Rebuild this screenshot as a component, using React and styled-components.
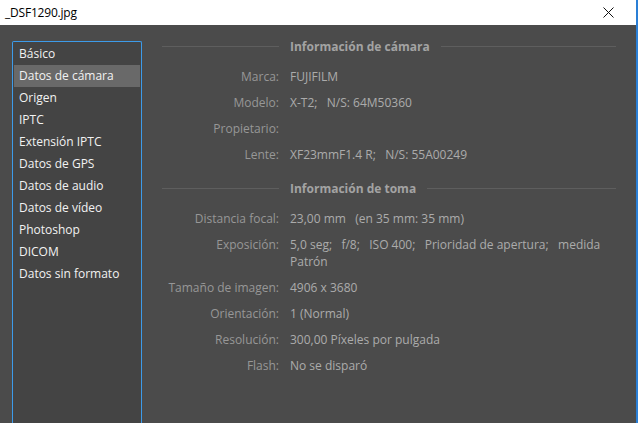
import React from 'react'
import styled, { createGlobalStyle } from 'styled-components'

const GlobalStyle = createGlobalStyle`
	html, body {
		margin: 0;
		padding: 0;
		background: #4b4b4b;
	}
	* {
		box-sizing: border-box;
	}
`

const sans = `"Open Sans", "Noto Sans", "Liberation Sans", sans-serif`

const Window = styled.div`
	width: 638px;
	height: 423px;
	display: flex;
	flex-direction: column;
	border-right: 2px solid #2a7fd6;
	font-family: ${sans};
	font-size: 12px;
	overflow: hidden;
`

const TitleBar = styled.div`
	height: 25px;
	flex: 0 0 25px;
	background: #ffffff;
	display: flex;
	align-items: center;
	justify-content: space-between;
	padding: 0 22px 0 5px;
	color: #000;
	font-size: 12px;
	letter-spacing: -0.2px;
`

const CloseButton = styled.svg`
	width: 11px;
	height: 11px;
	display: block;
`

const Body = styled.div`
	flex: 1;
	display: flex;
	align-items: stretch;
	background: #4b4b4b;
	padding: 16px 0 0 12px;
	min-height: 0;
`

const Sidebar = styled.ul`
	list-style: none;
	margin: 0;
	padding: 1px 0 0;
	width: 130px;
	flex: 0 0 130px;
	background: #444444;
	border: 1px solid #3d9be9;
	border-bottom: none;
	border-radius: 2px 2px 0 0;
`

const NavItem = styled.li`
	height: 22px;
	line-height: 22px;
	margin: 0 1px;
	padding-left: 5px;
	color: #f2f2f2;
	white-space: nowrap;
	background: ${({ active }) => (active ? '#696969' : 'transparent')};
`

const Content = styled.div`
	flex: 1;
	margin-top: -3px;
	padding: 0 20px 0 20px;
	display: flex;
	flex-direction: column;
`

const Section = styled.section`
	display: flex;
	flex-direction: column;
	gap: 9px;

	& + & {
		margin-top: 17px;
	}
`

const Grid = styled.div`
	display: grid;
	grid-template-columns: 117px 1fr;
	column-gap: 11px;
	align-items: start;
	line-height: 17px;
`

const HeaderRow = styled(Grid)`
	align-items: center;
	margin-bottom: ${({ space }) => space}px;
`

const Rule = styled.div`
	height: 1px;
	background: #5e5e5e;
`

const HeaderTitle = styled.div`
	display: flex;
	align-items: center;
	gap: 11px;
	font-weight: 700;
	color: #a3a3a3;

	& > span {
		white-space: nowrap;
	}
	& > ${Rule} {
		flex: 1;
	}
`

const Label = styled.div`
	text-align: right;
	color: #979797;
	white-space: nowrap;
`

const Value = styled.div`
	color: #ababab;
	white-space: pre-wrap;
`

const navItems = [
	'Básico',
	'Datos de cámara',
	'Origen',
	'IPTC',
	'Extensión IPTC',
	'Datos de GPS',
	'Datos de audio',
	'Datos de vídeo',
	'Photoshop',
	'DICOM',
	'Datos sin formato',
]

const sections = [
	{
		title: 'Información de cámara',
		space: 4,
		rows: [
			['Marca:', 'FUJIFILM'],
			['Modelo:', 'X-T2;   N/S: 64M50360'],
			['Propietario:', ''],
			['Lente:', 'XF23mmF1.4 R;   N/S: 55A00249'],
		],
	},
	{
		title: 'Información de toma',
		space: 4,
		rows: [
			['Distancia focal:', '23,00 mm   (en 35 mm: 35 mm)'],
			['Exposición:', '5,0 seg;   f/8;   ISO 400;   Prioridad de apertura;   medida Patrón'],
			['Tamaño de imagen:', '4906 x 3680'],
			['Orientación:', '1 (Normal)'],
			['Resolución:', '300,00 Píxeles por pulgada'],
			['Flash:', 'No se disparó'],
		],
	},
]

export default function App() {
	return (
		<Window>
			<GlobalStyle />
			<TitleBar>
				<span>_DSF1290.jpg</span>
				<CloseButton viewBox="0 0 11 11">
					<path d="M0.5 0.5 L10.5 10.5 M10.5 0.5 L0.5 10.5" stroke="#111" strokeWidth="1" />
				</CloseButton>
			</TitleBar>
			<Body>
				<Sidebar>
					{navItems.map((item) => (
						<NavItem key={item} active={item === 'Datos de cámara'}>
							{item}
						</NavItem>
					))}
				</Sidebar>
				<Content>
					{sections.map((section) => (
						<Section key={section.title}>
							<HeaderRow space={section.space}>
								<Rule />
								<HeaderTitle>
									<span>{section.title}</span>
									<Rule />
								</HeaderTitle>
							</HeaderRow>
							{section.rows.map(([label, value]) => (
								<Grid key={label}>
									<Label>{label}</Label>
									<Value>{value}</Value>
								</Grid>
							))}
						</Section>
					))}
				</Content>
			</Body>
		</Window>
	)
}
